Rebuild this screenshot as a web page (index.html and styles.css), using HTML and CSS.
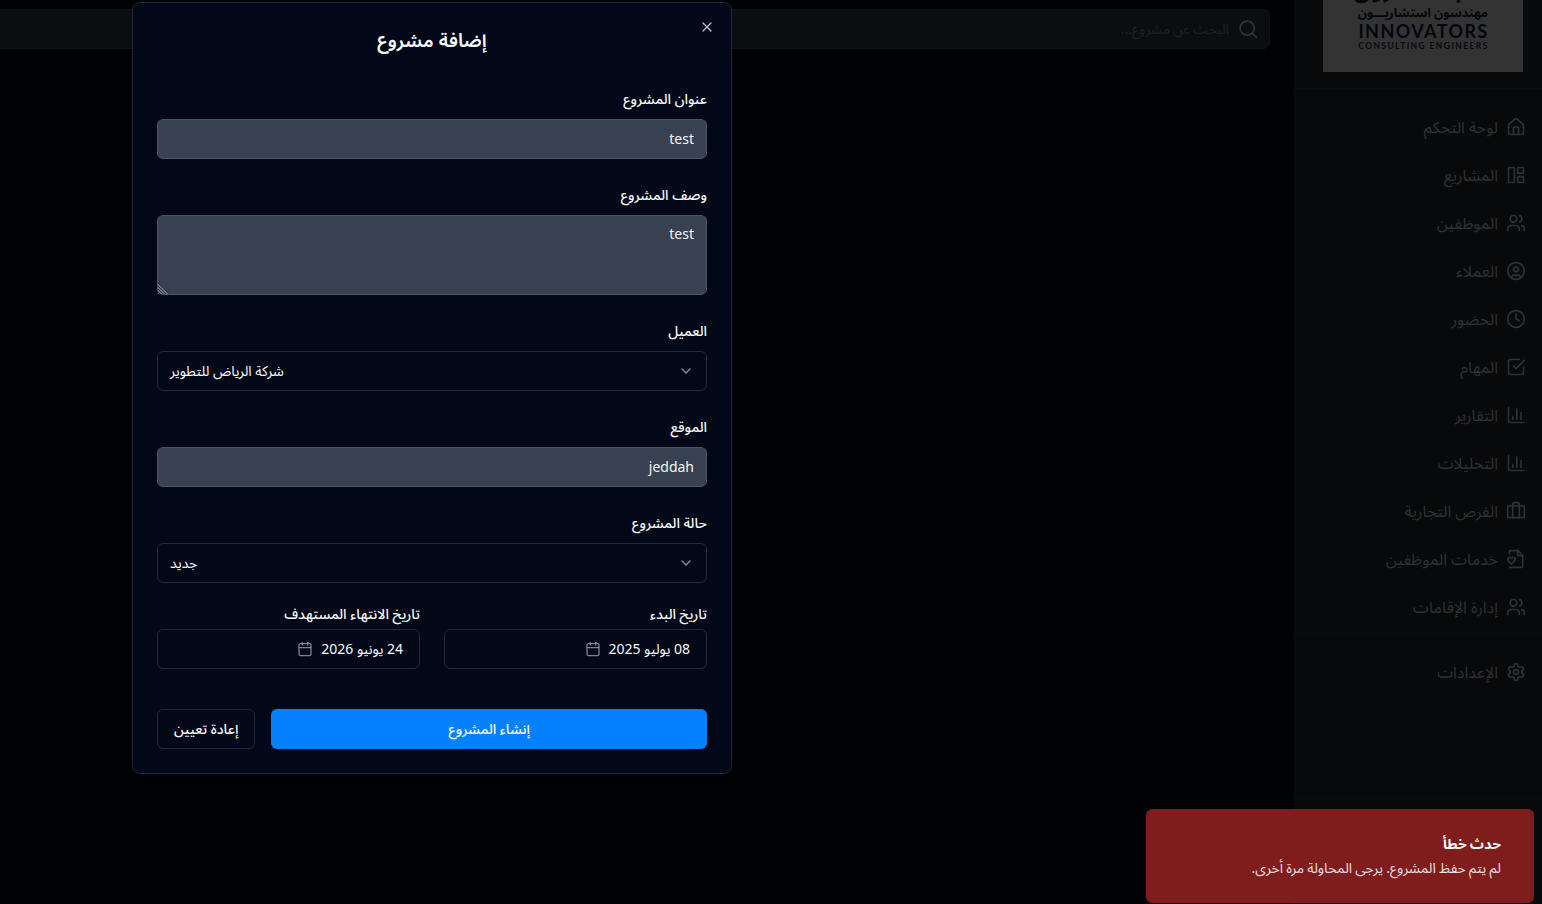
FILE: index.html
```html
<!DOCTYPE html>
<html lang="ar" dir="rtl">
<head>
<meta charset="utf-8">
<title>إضافة مشروع</title>
<link rel="stylesheet" href="styles.css">
</head>
<body>
<div class="app">
  <aside class="sidebar">
    <div class="brand">
      <div class="logo">
        <span class="logo-name">المبتـكــــرون</span>
        <span class="logo-sub">مهندسون استشاريـــون</span>
        <span class="logo-latin">INNOVATORS</span>
        <span class="logo-tag">CONSULTING ENGINEERS</span>
      </div>
    </div>
    <nav class="nav">
      <a class="nav-item"><svg class="icon" viewBox="0 0 24 24"><path d="M15 21v-8a1 1 0 0 0-1-1h-4a1 1 0 0 0-1 1v8"/><path d="M3 10a2 2 0 0 1 .709-1.528l7-5.999a2 2 0 0 1 2.582 0l7 5.999A2 2 0 0 1 21 10v9a2 2 0 0 1-2 2H5a2 2 0 0 1-2-2z"/></svg><span>لوحة التحكم</span></a>
      <a class="nav-item"><svg class="icon" viewBox="0 0 24 24"><rect x="3" y="3" width="7" height="18" rx="1"/><rect x="14" y="3" width="7" height="7" rx="1"/><rect x="14" y="14" width="7" height="7" rx="1"/></svg><span>المشاريع</span></a>
      <a class="nav-item"><svg class="icon" viewBox="0 0 24 24"><path d="M16 21v-2a4 4 0 0 0-4-4H6a4 4 0 0 0-4 4v2"/><circle cx="9" cy="7" r="4"/><path d="M22 21v-2a4 4 0 0 0-3-3.87"/><path d="M16 3.13a4 4 0 0 1 0 7.75"/></svg><span>الموظفين</span></a>
      <a class="nav-item"><svg class="icon" viewBox="0 0 24 24"><circle cx="12" cy="12" r="10"/><circle cx="12" cy="10" r="3"/><path d="M7 20.662V19a2 2 0 0 1 2-2h6a2 2 0 0 1 2 2v1.662"/></svg><span>العملاء</span></a>
      <a class="nav-item"><svg class="icon" viewBox="0 0 24 24"><circle cx="12" cy="12" r="10"/><path d="M12 6v6l4 2"/></svg><span>الحضور</span></a>
      <a class="nav-item"><svg class="icon" viewBox="0 0 24 24"><path d="m9 11 3 3L22 4"/><path d="M21 12v7a2 2 0 0 1-2 2H5a2 2 0 0 1-2-2V5a2 2 0 0 1 2-2h11"/></svg><span>المهام</span></a>
      <a class="nav-item"><svg class="icon" viewBox="0 0 24 24"><path d="M3 3v16a2 2 0 0 0 2 2h16"/><path d="M18 17V9"/><path d="M13 17V5"/><path d="M8 17v-3"/></svg><span>التقارير</span></a>
      <a class="nav-item"><svg class="icon" viewBox="0 0 24 24"><path d="M3 3v16a2 2 0 0 0 2 2h16"/><path d="M18 17V9"/><path d="M13 17V5"/><path d="M8 17v-3"/></svg><span>التحليلات</span></a>
      <a class="nav-item"><svg class="icon" viewBox="0 0 24 24"><path d="M16 20V4a2 2 0 0 0-2-2h-4a2 2 0 0 0-2 2v16"/><rect x="2" y="6" width="20" height="14" rx="2"/></svg><span>الفرص التجارية</span></a>
      <a class="nav-item"><svg class="icon" viewBox="0 0 24 24"><path d="M4 6V4a2 2 0 0 1 2-2h8.5L20 7.5V20a2 2 0 0 1-2 2H4"/><path d="M14 2v4a2 2 0 0 0 2 2h4"/><path d="M10.29 10.7a2.43 2.43 0 0 0-2.66-.52c-.29.12-.56.3-.78.53l-.35.34-.35-.34a2.43 2.43 0 0 0-2.65-.53c-.3.12-.56.3-.79.53-.95.94-1 2.53.2 3.74L6.5 18l3.6-3.55c1.2-1.21 1.14-2.8.19-3.74Z"/></svg><span>خدمات الموظفين</span></a>
      <a class="nav-item"><svg class="icon" viewBox="0 0 24 24"><path d="M16 21v-2a4 4 0 0 0-4-4H6a4 4 0 0 0-4 4v2"/><circle cx="9" cy="7" r="4"/><path d="M22 21v-2a4 4 0 0 0-3-3.87"/><path d="M16 3.13a4 4 0 0 1 0 7.75"/></svg><span>إدارة الإقامات</span></a>
    </nav>
    <div class="nav nav-settings">
      <a class="nav-item"><svg class="icon" viewBox="0 0 24 24"><path d="M12.22 2h-.44a2 2 0 0 0-2 2v.18a2 2 0 0 1-1 1.73l-.43.25a2 2 0 0 1-2 0l-.15-.08a2 2 0 0 0-2.73.73l-.22.38a2 2 0 0 0 .73 2.73l.15.1a2 2 0 0 1 1 1.72v.51a2 2 0 0 1-1 1.74l-.15.09a2 2 0 0 0-.73 2.73l.22.38a2 2 0 0 0 2.73.73l.15-.08a2 2 0 0 1 2 0l.43.25a2 2 0 0 1 1 1.73V20a2 2 0 0 0 2 2h.44a2 2 0 0 0 2-2v-.18a2 2 0 0 1 1-1.73l.43-.25a2 2 0 0 1 2 0l.15.08a2 2 0 0 0 2.73-.73l.22-.39a2 2 0 0 0-.73-2.73l-.15-.08a2 2 0 0 1-1-1.74v-.5a2 2 0 0 1 1-1.74l.15-.09a2 2 0 0 0 .73-2.73l-.22-.38a2 2 0 0 0-2.73-.73l-.15.08a2 2 0 0 1-2 0l-.43-.25a2 2 0 0 1-1-1.73V4a2 2 0 0 0-2-2z"/><circle cx="12" cy="12" r="3"/></svg><span>الإعدادات</span></a>
    </div>
    <div class="sidebar-foot"></div>
  </aside>
  <main class="main">
    <div class="search"><svg class="icon" viewBox="0 0 24 24"><circle cx="11" cy="11" r="8.5"/><path d="m22 22-4.7-4.7"/></svg><span>البحث عن مشروع...</span></div>
  </main>
</div>

<div class="dialog" role="dialog">
  <button class="close" aria-label="إغلاق"><svg class="icon" viewBox="0 0 24 24"><path d="M18 6 6 18"/><path d="m6 6 12 12"/></svg></button>
  <h2 class="title">إضافة مشروع</h2>
  <form class="form">
    <div class="field"><label>عنوان المشروع</label><input class="control filled" value="test"></div>
    <div class="field"><label>وصف المشروع</label><textarea class="control filled area">test</textarea></div>
    <div class="field"><label>العميل</label><div class="control select"><svg class="icon" viewBox="0 0 24 24"><path d="m6 9 6 6 6-6"/></svg><span>شركة الرياض للتطوير</span></div></div>
    <div class="field"><label>الموقع</label><input class="control filled" value="jeddah"></div>
    <div class="field"><label>حالة المشروع</label><div class="control select"><svg class="icon" viewBox="0 0 24 24"><path d="m6 9 6 6 6-6"/></svg><span>جديد</span></div></div>
    <div class="dates">
      <div class="date-field"><label>تاريخ البدء</label><div class="control date date-start"><span>08 يوليو 2025</span><svg class="icon" viewBox="0 0 24 24"><path d="M8 2v4"/><path d="M16 2v4"/><rect x="3" y="4" width="18" height="18" rx="2"/><path d="M3 10h18"/></svg></div></div>
      <div class="date-field"><label>تاريخ الانتهاء المستهدف</label><div class="control date"><span>24 يونيو 2026</span><svg class="icon" viewBox="0 0 24 24"><path d="M8 2v4"/><path d="M16 2v4"/><rect x="3" y="4" width="18" height="18" rx="2"/><path d="M3 10h18"/></svg></div></div>
    </div>
    <div class="actions"><button type="button" class="btn primary">إنشاء المشروع</button><button type="button" class="btn outline">إعادة تعيين</button></div>
  </form>
</div>

<div class="toast" role="alert">
  <div class="toast-title">حدث خطأ</div>
  <div class="toast-text">لم يتم حفظ المشروع. يرجى المحاولة مرة أخرى.</div>
</div>
</body>
</html>
```
FILE: styles.css
```css
* { box-sizing: border-box; }
html, body { margin: 0; height: 100%; overflow: hidden; }
body {
  background: #000104;
  color: #f8fafc;
  font-family: "Noto Sans", "Noto Sans Arabic", sans-serif;
  font-size: 14px;
  line-height: 20px;
}
input, textarea, button { font: inherit; color: inherit; }
.icon { flex: none; fill: none; stroke: currentColor; stroke-width: 2; stroke-linecap: round; stroke-linejoin: round; }

.app { display: flex; height: 904px; }
.sidebar {
  display: flex; flex-direction: column; flex: none;
  width: 248px; height: 904px;
  background: #07090a; border-left: 1px solid #0b0d0f;
  color: #303133;
}
.brand { display: flex; flex: none; justify-content: center; align-items: flex-end; height: 89px; padding: 0 0 16px 9px; border-bottom: 1px solid #0b0d10; overflow: hidden; }
.logo {
  display: flex; flex-direction: column; align-items: center; justify-content: flex-end;
  width: 200px; height: 200px; flex: none; padding-bottom: 20px;
  background: #333333; color: #03060e; white-space: nowrap;
}
.logo-name { font-size: 25px; line-height: 34px; font-weight: 700; }
.logo-sub { font-size: 12.5px; line-height: 17px; font-weight: 700; }
.logo-latin { font-family: Lato, sans-serif; font-size: 18px; line-height: 20px; font-weight: 700; letter-spacing: 1.4px; margin-left: 1px; direction: ltr; }
.logo-tag { font-family: Lato, sans-serif; font-size: 8.5px; line-height: 11px; font-weight: 700; letter-spacing: 1.4px; margin-left: 1px; direction: ltr; color: #08090c; }
.nav { display: flex; flex: none; flex-direction: column; gap: 8px; padding: 18px 16px 0; height: 544px; }
.nav-item { display: flex; flex: none; align-items: center; gap: 8px; height: 40px; font-size: 16px; line-height: 24px; }
.nav-item .icon { width: 20px; height: 20px; }
.nav-settings { border-top: 1px solid #0b0d10; height: 165px; }
.sidebar-foot { flex: 1; border-top: 1px solid #0b0d10; }

.main { flex: 1; padding: 9px 24px; }
.search { display: flex; align-items: center; gap: 9px; height: 40px; margin-left: -40px; padding: 0 11px; background: #0b0d10; border: 1px solid #0f1215; border-radius: 6px; color: #1d2024; word-spacing: -.8px; }
.search .icon { width: 20px; height: 20px; color: #333333; }

.dialog {
  position: absolute; left: 132px; top: 2px; width: 600px; height: 772px;
  padding: 23px 24px; background: #020817; border: 1px solid #1e293b; border-radius: 8px;
}
.close { position: absolute; top: 16px; right: 16px; width: 16px; height: 16px; padding: 0; border: 0; background: none; display: flex; color: #b4b7bd; }
.close .icon { width: 16px; height: 16px; }
.title { margin: 0; text-align: center; font-size: 19px; line-height: 28px; font-weight: 600; }
.form { display: flex; flex-direction: column; padding-top: 33px; }
.field { display: flex; flex-direction: column; gap: 8px; padding-bottom: 24px; }
label { font-size: 14px; line-height: 24px; font-weight: 500; }
.control { display: flex; align-items: center; width: 100%; height: 40px; padding: 8px 12px; border: 1px solid #1e293b; border-radius: 6px; background: #020817; outline: none; }
.filled { background: #374151; border-color: #4b5563; color: #f3f4f6; }
input.filled { padding: 7px 12px 9px; }
.area { display: block; height: 80px; resize: vertical; }
.area::-webkit-resizer {
  background:
    linear-gradient(to top right, transparent 38%, #374151 39%) left bottom / 15px 15px no-repeat,
    repeating-linear-gradient(to top right, #70767f 0 1px, #2b313b 1px 2.1px) left bottom / 15px 15px no-repeat;
}
.select { justify-content: space-between; }
.select .icon { width: 16px; height: 16px; color: #8a8f99; }
.dates { display: grid; grid-template-columns: 1fr 1fr; gap: 24px; margin-top: -5px; }
.date-field { display: flex; flex-direction: column; gap: 3px; }
.date { gap: 8px; padding: 8px 16px; }
.date-start { gap: 7px; }
.date .icon { width: 16px; height: 16px; color: #7c8088; }
.actions { display: flex; gap: 16px; padding-top: 40px; }
.btn { height: 40px; padding: 0 16px; border-radius: 6px; font-weight: 500; }
.primary { flex: 1; border: 0; background: #0580ff; }
.outline { background: #020817; border: 1px solid #1e293b; }

.toast { position: absolute; left: 1146px; top: 809px; width: 388px; height: 94px; padding: 24px 32px; border-radius: 6px; background: #7f1d1d; border: 1px solid #7f1d1d; }
.toast-title { font-weight: 700; word-spacing: -.6px; }
.toast-text { padding-top: 4px; color: #f0dfe0; word-spacing: -.45px; }
```
